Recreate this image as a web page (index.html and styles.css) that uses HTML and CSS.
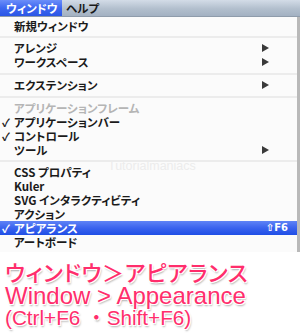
FILE: index.html
```html
<!DOCTYPE html>
<html lang="ja">
<head>
<meta charset="utf-8">
<link rel="stylesheet" href="styles.css">
</head>
<body>
<div class="shot">
  <div class="menubar">
    <span class="mb-item active">ウィンドウ</span>
    <span class="mb-item">ヘルプ</span>
  </div>
  <div class="menu">
    <div class="row first">新規ウィンドウ</div>
    <div class="sep s8"></div>
    <div class="row">アレンジ<span class="arrow"></span></div>
    <div class="row">ワークスペース<span class="arrow"></span></div>
    <div class="sep s9"></div>
    <div class="row">エクステンション<span class="arrow"></span></div>
    <div class="sep s9"></div>
    <div class="row disabled">アプリケーションフレーム</div>
    <div class="row"><span class="check">✓</span>アプリケーションバー</div>
    <div class="row"><span class="check">✓</span>コントロール</div>
    <div class="row">ツール<span class="arrow"></span></div>
    <div class="sep s8"></div>
    <div class="row">CSS プロパティ</div>
    <div class="row">Kuler</div>
    <div class="row">SVG インタラクティビティ</div>
    <div class="row">アクション</div>
    <div class="row selected"><span class="check">✓</span>アピアランス<span class="shortcut">⇧F6</span></div>
    <div class="row">アートボード</div>
    <div class="watermark">Tutorialmaniacs</div>
  </div>
  <div class="caption">
    <div class="cap-line l1">ウィンドウ＞アピアランス</div>
    <div class="cap-line l2">Window &gt; Appearance</div>
    <div class="cap-line l3">(Ctrl+F6 ・Shift+F6)</div>
  </div>
</div>
</body>
</html>
```
FILE: styles.css
```css
html, body {
  margin: 0;
  padding: 0;
  background: #ffffff;
}
.shot {
  width: 300px;
  height: 336px;
  overflow: hidden;
  font-family: "Noto Sans CJK JP", "Liberation Sans", sans-serif;
}
.menubar {
  height: 17px;
  display: flex;
  align-items: stretch;
  background: linear-gradient(#d3dce7, #b2bfcd 55%, #a3b1c2);
  border-bottom: 1px solid #8f9cab;
  box-sizing: border-box;
}
.mb-item {
  font-size: 11.5px;
  line-height: 16px;
  font-weight: 600;
  font-feature-settings: "palt";
  color: #1a1a1a;
  padding: 0 4px;
  white-space: nowrap;
}
.mb-item.active {
  width: 62px;
  box-sizing: border-box;
  padding-left: 6px;
  color: #ffffff;
  background: linear-gradient(#6b8ef9, #3d67f0 50%, #2a56e6);
}
.menu {
  position: relative;
  height: 235px;
  overflow: hidden;
  background: #fbfbfb;
  border-right: 3px solid #b9b9b9;
  box-sizing: border-box;
  padding-top: 2px;
}
.row {
  position: relative;
  height: 14px;
  line-height: 14px;
  font-size: 11.5px;
  font-weight: 600;
  font-feature-settings: "palt";
  color: #1a1a1a;
  padding-left: 14px;
  white-space: nowrap;
}
.row.disabled {
  color: #b5b5b5;
}
.row.selected {
  color: #ffffff;
  background: linear-gradient(#5f83f6, #3a63ee 50%, #1f4ee6);
}
.check {
  position: absolute;
  left: 2px;
  top: 0;
  font-size: 11px;
}
.arrow {
  position: absolute;
  right: 28px;
  top: 3px;
  width: 0;
  height: 0;
  border-top: 4px solid transparent;
  border-bottom: 4px solid transparent;
  border-left: 7px solid #3a3a3a;
}
.shortcut {
  position: absolute;
  right: 9px;
  top: 0;
  font-size: 10px;
  font-weight: 700;
  font-family: "DejaVu Sans", sans-serif;
}
.sep {
  position: relative;
}
.sep::after {
  content: "";
  position: absolute;
  left: 0;
  right: 0;
  top: 3px;
  height: 2px;
  background: #ececec;
}
.s8 { height: 8px; }
.s9 { height: 9px; }
.s9::after { top: 4px; }
.watermark {
  position: absolute;
  left: 108px;
  top: 142px;
  font-family: "Liberation Sans", sans-serif;
  font-size: 12.5px;
  line-height: 14px;
  color: #ececec;
}
.caption {
  padding: 7px 0 0 5px;
}
.cap-line {
  color: #ff2e6c;
  white-space: nowrap;
  text-shadow: 1px 1px 0 #fff, -1px -1px 0 #fff, 1px -1px 0 #fff, -1px 1px 0 #fff, 1px 2px 2px rgba(0,0,0,0.35);
}
.cap-line.l1 {
  font-family: "Noto Sans CJK JP", sans-serif;
  font-weight: 500;
  font-size: 22px;
  line-height: 24px;
  letter-spacing: 0.7px;
  font-feature-settings: "palt";
}
.cap-line.l2 {
  font-family: "Liberation Sans", "Noto Sans CJK JP", sans-serif;
  font-size: 24px;
  line-height: 26px;
}
.cap-line.l3 {
  font-family: "Liberation Sans", "Noto Sans CJK JP", sans-serif;
  font-size: 20.7px;
  line-height: 18px;
}
```
